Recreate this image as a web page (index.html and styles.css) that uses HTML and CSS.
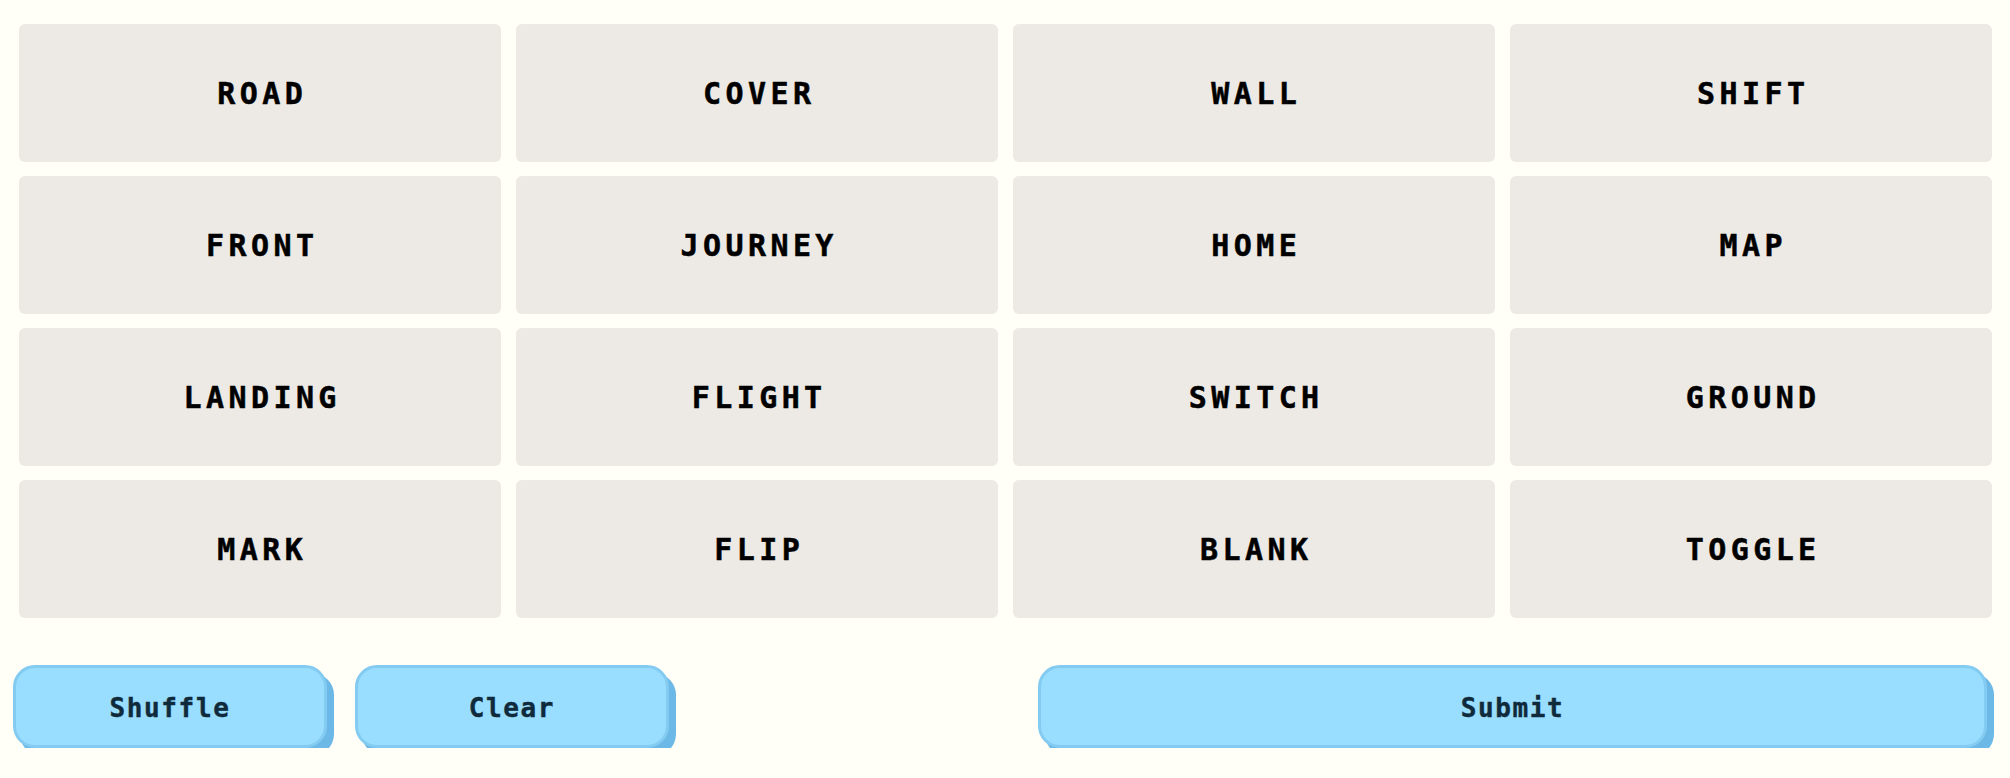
FILE: index.html
```html
<!DOCTYPE html>
<html>
<head>
<meta charset="utf-8">
<link rel="stylesheet" href="styles.css">
</head>
<body>
<main class="game">
  <div class="board">
    <div class="tile">ROAD</div>
    <div class="tile">COVER</div>
    <div class="tile">WALL</div>
    <div class="tile">SHIFT</div>
    <div class="tile">FRONT</div>
    <div class="tile">JOURNEY</div>
    <div class="tile">HOME</div>
    <div class="tile">MAP</div>
    <div class="tile">LANDING</div>
    <div class="tile">FLIGHT</div>
    <div class="tile">SWITCH</div>
    <div class="tile">GROUND</div>
    <div class="tile">MARK</div>
    <div class="tile">FLIP</div>
    <div class="tile">BLANK</div>
    <div class="tile">TOGGLE</div>
  </div>
  <div class="controls">
    <button class="btn btn-small">Shuffle</button>
    <button class="btn btn-small">Clear</button>
    <button class="btn btn-submit">Submit</button>
  </div>
</main>
</body>
</html>
```

FILE: styles.css
```css
html, body {
  margin: 0;
  padding: 0;
  background: #fffef7;
}

.game {
  padding: 24px 18px 0 19px;
  font-family: "DejaVu Sans Mono", "Liberation Mono", monospace;
}

.board {
  display: grid;
  grid-template-columns: repeat(4, 1fr);
  column-gap: 15px;
  row-gap: 14px;
}

.tile {
  height: 138px;
  background: #edeae5;
  border-radius: 6px;
  display: flex;
  align-items: center;
  justify-content: center;
  font-size: 30px;
  font-weight: bold;
  letter-spacing: 4.4px;
  text-indent: 4.4px;
  -webkit-text-stroke: 0.5px #000;
  color: #000;
}

.controls {
  display: flex;
  align-items: flex-start;
  margin: 47px 5px 0 -6px;
}

.btn {
  height: 83px;
  box-sizing: border-box;
  background: #99ddff;
  border: 3px solid #84cbf1;
  border-radius: 22px;
  box-shadow: 7px 8px 0 0 #6cb8e6;
  font-family: "DejaVu Sans Mono", "Liberation Mono", monospace;
  font-weight: bold;
  font-size: 26px;
  letter-spacing: 1.6px;
  -webkit-text-stroke: 0.4px #0f2a3b;
  color: #0f2a3b;
  padding: 3px 0 0 0;
}

.btn-small {
  width: 314px;
  margin-right: 28px;
}

.btn-submit {
  width: 949px;
  margin-left: auto;
}
```
